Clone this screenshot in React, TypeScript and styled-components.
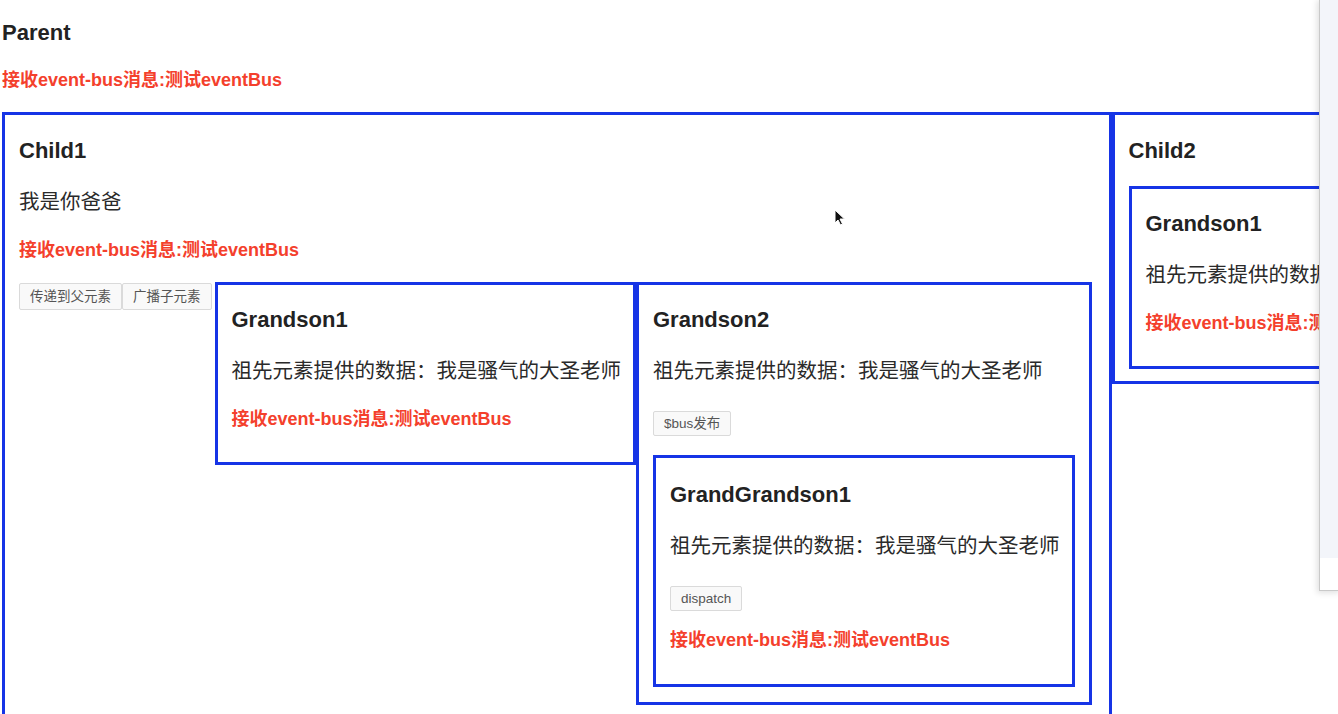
import React from 'react';
import styled, { createGlobalStyle } from 'styled-components';

const blue = '#1634e6';
const red = '#f4402c';
const fontStack = '"Liberation Sans", "Noto Sans CJK SC", sans-serif';

const GlobalStyle = createGlobalStyle`
  html, body {
    margin: 0;
    padding: 0;
    background: #fff;
    overflow: hidden;
  }
  body {
    font-family: ${fontStack};
    color: #2a2a2a;
  }
`;

const Page = styled.div`
  position: relative;
  width: 1338px;
  height: 714px;
  padding-left: 2px;
  box-sizing: border-box;
  display: flex;
  flex-direction: column;
  align-items: flex-start;
  overflow: hidden;
`;

const Heading = styled.h3<{ $top?: number }>`
  margin: ${p => p.$top ?? 22}px 0 0;
  font-size: 22px;
  line-height: 28px;
  font-weight: 700;
  color: #222;
  white-space: nowrap;
`;

const Text = styled.p`
  margin: 25px 0 0;
  font-size: 20.5px;
  line-height: 24px;
  white-space: nowrap;
`;

const Msg = styled.p<{ $top?: number }>`
  margin: ${p => p.$top ?? 24}px 0 0;
  font-size: 18px;
  line-height: 24px;
  font-weight: 700;
  color: ${red};
  white-space: nowrap;
`;

const Row = styled.div<{ $top?: number }>`
  display: flex;
  align-items: flex-start;
  flex-shrink: 0;
  margin-top: ${p => p.$top ?? 21}px;
`;

const Box = styled.div<{ $bottom?: number; $right?: number }>`
  display: flex;
  flex-direction: column;
  align-items: flex-start;
  flex-shrink: 0;
  border: 3px solid ${blue};
  padding: 0 ${p => p.$right ?? 12}px ${p => p.$bottom ?? 31}px 14px;
`;

const ButtonGroup = styled.div`
  display: flex;
  margin: 1px 3px 0 0;
`;

const Button = styled.button<{ $top?: number; $tall?: boolean }>`
  margin: ${p => p.$top ?? 0}px 0 0;
  padding: ${p => (p.$tall ? 4 : 3)}px 10px;
  font-family: ${fontStack};
  font-size: 13.5px;
  line-height: 17px;
  color: #555;
  background: #f9f9f9;
  border: 1px solid #dadada;
  border-radius: 2px;
  white-space: nowrap;
`;

const SidePanel = styled.div`
  position: absolute;
  top: -2px;
  right: -4px;
  width: 22px;
  height: 592px;
  background: linear-gradient(#f3f5fa 0, #f3f5fa 560px, #fff 560px);
  border-left: 1px solid #c9c9c9;
  border-bottom: 1px solid #c9c9c9;
  box-shadow: -2px 2px 6px rgba(0, 0, 0, 0.12);
`;

const Cursor = styled.svg`
  position: absolute;
  left: 834px;
  top: 209px;
`;

const msg = '接收event-bus消息:测试eventBus';
const provided = '祖先元素提供的数据：我是骚气的大圣老师';

const Grandson1: React.FC = () => (
  <Box>
    <Heading $top={21}>Grandson1</Heading>
    <Text>{provided}</Text>
    <Msg>{msg}</Msg>
  </Box>
);

const GrandGrandson1: React.FC = () => (
  <Box $bottom={32}>
    <Heading $top={23}>GrandGrandson1</Heading>
    <Text>{provided}</Text>
    <Button $top={28}>dispatch</Button>
    <Msg $top={17}>{msg}</Msg>
  </Box>
);

const Grandson2: React.FC = () => (
  <Box $bottom={15} $right={14}>
    <Heading $top={21}>Grandson2</Heading>
    <Text>{provided}</Text>
    <Button $top={28}>$bus发布</Button>
    <Row $top={19}>
      <GrandGrandson1 />
    </Row>
  </Box>
);

const App: React.FC = () => {
  return (
    <Page>
      <GlobalStyle />
      <Heading $top={19}>Parent</Heading>
      <Msg $top={21}>{msg}</Msg>
      <Row $top={20}>
        <Box $right={17}>
          <Heading>Child1</Heading>
          <Text>我是你爸爸</Text>
          <Msg>{msg}</Msg>
          <Row $top={20}>
            <ButtonGroup>
              <Button $tall>传递到父元素</Button>
              <Button $tall>广播子元素</Button>
            </ButtonGroup>
            <Grandson1 />
            <Grandson2 />
          </Row>
        </Box>
        <Box $bottom={12}>
          <Heading>Child2</Heading>
          <Row>
            <Grandson1 />
          </Row>
        </Box>
      </Row>
      <SidePanel />
      <Cursor width="12" height="17" viewBox="0 0 12 17">
        <path d="M1 1 L1 14 L4 11 L6.5 16 L8.5 15 L6 10 L10.5 10 Z" fill="#111" stroke="#fff" strokeWidth="1" />
      </Cursor>
    </Page>
  );
};

export default App;
